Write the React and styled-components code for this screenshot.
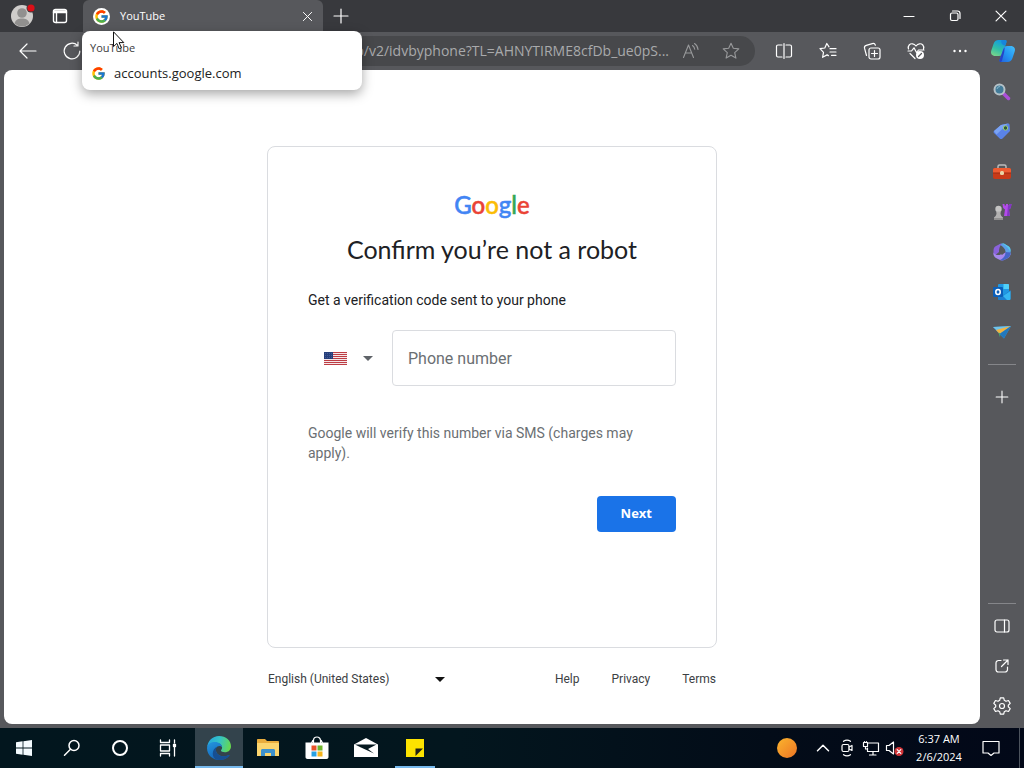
import React from "react";
import styled, { createGlobalStyle } from "styled-components";
import { FcGoogle } from "react-icons/fc";

const uiFont = `"Open Sans", "Noto Sans", sans-serif`;

const GlobalStyle = createGlobalStyle`
  *, *::before, *::after { box-sizing: border-box; }
  body { margin: 0; background: #57585c; font-family: Roboto, "Liberation Sans", sans-serif; }
  button, input, select { font: inherit; }
  svg { display: block; flex: none; }
`;

const Desktop = styled.div`
  min-height: 100vh;
  display: flex;
  flex-direction: column;
`;

const PlainButton = styled.button`
  display: flex;
  align-items: center;
  justify-content: center;
  flex: none;
  padding: 0;
  border: 0;
  background: none;
  color: #fff;
`;

/* Tab strip */
const TabStrip = styled.header`
  display: flex;
  height: 32px;
  background: #38393d;
`;
const TitleButton = styled(PlainButton)`
  width: ${(p) => p.$width}px;
`;
const Tab = styled.div`
  position: relative;
  display: flex;
  align-items: center;
  width: 240px;
  margin-left: 7px;
  padding: 0 8px 0 10px;
  border-radius: 6px 6px 0 0;
  background: #57585c;
  color: #fff;
  font: 11px/16px ${uiFont};
`;
const TabIcon = styled.span`
  display: flex;
  padding: 1px;
  margin-right: 10px;
  border-radius: 50%;
  background: #fff;
`;
const TabTitle = styled.span`
  flex: 1;
`;
const Spacer = styled.div`
  flex: 1;
`;
const HoverCard = styled.div`
  position: absolute;
  z-index: 2;
  top: 31px;
  left: -1px;
  width: 280px;
  padding: 8px 8px 7px;
  border-radius: 8px;
  background: #fff;
  box-shadow: 0 4px 12px rgba(0, 0, 0, 0.35);
  color: #3c3c3c;
`;
const HoverTitle = styled.div`
  font: 11px/18px ${uiFont};
`;
const HoverSite = styled.div`
  display: flex;
  align-items: center;
  gap: 8px;
  padding: 6px 0 0 1px;
  color: #222;
  font: 13px/20px ${uiFont};
`;
const Pointer = styled.svg`
  position: absolute;
  z-index: 3;
  top: 31px;
  left: 30px;
`;

/* Toolbar */
const Toolbar = styled.nav`
  display: flex;
  align-items: center;
  height: 38px;
  padding-left: 6px;
  background: #57585c;
`;
const ToolButton = styled(PlainButton)`
  width: ${(p) => p.$width || 44}px;
  height: 32px;
`;
const AddressBar = styled.div`
  display: flex;
  align-items: center;
  flex: 1;
  min-width: 0;
  height: 30px;
  margin: 0 7px 0 4px;
  padding-right: 4px;
  border-radius: 15px;
  background: #47484b;
`;
const AddressInput = styled.input`
  flex: 1;
  min-width: 0;
  padding: 0 2px 0 0;
  border: 0;
  outline: 0;
  background: none;
  color: #a9aaac;
  text-align: right;
  font: 14px/20px ${uiFont};
`;
const AddressButton = styled(PlainButton)`
  width: 40px;
  color: #98999b;
`;

/* Content and sidebar */
const Body = styled.div`
  display: flex;
  flex: 1;
  background: #57585c;
`;
const Page = styled.main`
  display: flex;
  flex: 1;
  flex-direction: column;
  align-items: center;
  margin: 0 0 4px 4px;
  padding: 76px 24px 35px;
  border-radius: 8px;
  background: #fff;
`;
const Sidebar = styled.aside`
  display: flex;
  flex-direction: column;
  width: 44px;
  padding: 2px 0;
`;
const SideButton = styled(PlainButton)`
  height: 40px;
`;
const SideRule = styled.hr`
  width: 28px;
  margin: ${(p) => p.$gap};
  align-self: center;
  border: 0;
  border-top: 1px solid #85868a;
`;

/* Sign-in card */
const Card = styled.form`
  width: 100%;
  max-width: 450px;
  min-height: 502px;
  padding: 46px 40px 40px;
  border: 1px solid #dadce0;
  border-radius: 8px;
`;
const Wordmark = styled.div`
  text-align: center;
  font: 500 24px/24px Lato, sans-serif;
  -webkit-text-stroke: 0.5px currentColor;
  span:nth-child(1), span:nth-child(4) { color: #4285f4; }
  span:nth-child(2), span:nth-child(6) { color: #ea4335; }
  span:nth-child(3) { color: #fbbc05; }
  span:nth-child(5) { color: #34a853; }
`;
const Heading = styled.h1`
  margin: 16px 0 25px;
  color: #202124;
  text-align: center;
  font: 400 25px/32px Lato, sans-serif;
`;
const Lead = styled.p`
  margin: 0;
  color: #202124;
  font-size: 14px;
  line-height: 20px;
`;
const PhoneRow = styled.div`
  display: flex;
  gap: 4px;
  margin: 20px 0 37px;
`;
const CountryField = styled.label`
  display: flex;
  align-items: center;
  position: relative;
  gap: 16px;
  width: 80px;
  padding-left: 16px;
`;
const CountrySelect = styled.select`
  position: absolute;
  inset: 0;
  width: 100%;
  border: 0;
  background: none;
  appearance: none;
`;
const PhoneInput = styled.input`
  flex: 1;
  min-width: 0;
  height: 56px;
  padding: 0 15px;
  border: 1px solid #dadce0;
  border-radius: 4px;
  background: #fff;
  font-size: 16px;
  &::placeholder { color: #6b6f73; opacity: 1; }
`;
const Note = styled.p`
  margin: 0 0 33px;
  color: #6b6f73;
  font-size: 14px;
  line-height: 20px;
`;
const Actions = styled.div`
  display: flex;
  justify-content: flex-end;
`;
const NextButton = styled.button`
  height: 36px;
  padding: 0 24px 2px;
  border: 0;
  border-radius: 4px;
  background: #1a73e8;
  color: #fff;
  font: 700 13px/20px ${uiFont};
`;
const Footer = styled.footer`
  display: flex;
  align-items: center;
  justify-content: space-between;
  width: 100%;
  max-width: 450px;
  padding: 21px 1px 0;
  color: #3c4043;
  font-size: 12px;
  line-height: 20px;
`;
const LanguageField = styled.label`
  position: relative;
  display: flex;
  align-items: center;
`;
const LanguageSelect = styled.select`
  width: 177px;
  height: 20px;
  padding: 0;
  border: 0;
  background: none;
  color: inherit;
  appearance: none;
`;
const LanguageArrow = styled.svg`
  position: absolute;
  right: 0;
  pointer-events: none;
`;
const FooterLinks = styled.nav`
  display: flex;
  gap: 32px;
`;
const FooterLink = styled.a`
  color: inherit;
  text-decoration: none;
`;

/* Taskbar */
const Taskbar = styled.footer`
  display: flex;
  height: 40px;
  background: linear-gradient(90deg, #02161e 0%, #03161e 45%, #030c18 75%, #020818 100%);
`;
const TaskGroup = styled.div`
  display: flex;
  gap: ${(p) => p.$gap || 0}px;
  margin-left: ${(p) => p.$inset || 0}px;
`;
const TaskButton = styled(PlainButton)`
  position: relative;
  width: ${(p) => p.$width || 48}px;
  background: ${(p) => (p.$active ? "#33434c" : "none")};
  &::after {
    content: "";
    display: ${(p) => (p.$running ? "block" : "none")};
    position: absolute;
    bottom: 0;
    left: ${(p) => (p.$active ? 0 : 4)}px;
    right: ${(p) => (p.$active ? 0 : 4)}px;
    height: 2px;
    background: #76b9ed;
  }
`;
const Clock = styled(PlainButton)`
  flex-direction: column;
  width: 64px;
  font: 11px/18px ${uiFont};
`;
const ShowDesktop = styled(PlainButton)`
  width: 5px;
  margin-left: 8px;
  border-left: 1px solid #4c535d;
`;

function Line({ size = 20, width = 1.2, children, ...rest }) {
  return (
    <svg width={size} height={size} viewBox="0 0 20 20" fill="none" stroke="currentColor" strokeWidth={width} strokeLinecap="round" strokeLinejoin="round" aria-hidden="true" {...rest}>
      {children}
    </svg>
  );
}

const CloseIcon = ({ size = 16 }) => <Line size={size} width={1.3}><path d="M4.5 4.5l11 11M15.5 4.5l-11 11" /></Line>;
const star = "M10 2.2l2.3 5.1 5.5.6-4.1 3.7 1.2 5.5L10 14.3l-4.9 2.8 1.2-5.5L2.2 7.900l5.500-.6z";

const AvatarIcon = () => (
  <svg width="28" height="28" viewBox="0 0 28 28" aria-hidden="true">
    <circle cx="14" cy="14" r="11" fill="#cfcdcb" />
    <circle cx="14" cy="11" r="4.800" fill="#91908f" />
    <path d="M6.500 21.500c1-4 4-5 7.500-5s6.500 1 7.500 5A11 11 0 0 1 6.500 21.500z" fill="#91908f" />
    <circle cx="23" cy="6" r="4.500" fill="#38393d" />
    <circle cx="23" cy="6" r="3.600" fill="#dc0f17" />
  </svg>
);

const CopilotIcon = () => (
  <svg width="26" height="24" viewBox="0 0 26 24" aria-hidden="true">
    <defs>
      <linearGradient id="cpa" x1=".2" y1="1" x2=".6" y2="0"><stop stopColor="#7bd68a" /><stop offset=".45" stopColor="#31bfa5" /><stop offset="1" stopColor="#129ae2" /></linearGradient>
      <linearGradient id="cpb" x1="0" y1="1" x2="1" y2="0"><stop stopColor="#2360dc" /><stop offset=".5" stopColor="#2497f3" /><stop offset="1" stopColor="#45c0fa" /></linearGradient>
    </defs>
    <path d="M8.500 1H15c1.200 0 1.800.8 1.400 2.200L12.500 14.500c-.6 1.700-1.700 2.500-3.500 2.500H5.500C1.800 17 .3 14.500 1.300 11.500L3.500 5C4.400 2.200 6 1 8.500 1z" fill="url(#cpa)" />
    <path d="M11.500 1H15c1.200 0 1.800.8 1.500 2.200L15.500 6.500C12.500 6.500 10.500 4 11.500 1z" fill="#1785dc" />
    <path d="M17 7h3.500c3.700 0 5.200 2.500 4.200 5.500L22.500 19c-.9 2.800-2.500 4-5 4H11c-1.200 0-1.800-.8-1.400-2.200L13.500 9.500C14.100 7.800 15.200 7 17 7z" fill="url(#cpb)" />
    <path d="M13.200 10.500c.3-1 .8-1.700 1.500-2.300l-.5 5L12 21.500c-.3.900-.7 1.300-1.400 1.500-1-.2-1.300-1-1-2.200z" fill="#2444c8" />
  </svg>
);

const SideSearch = () => (
  <svg width="20" height="20" viewBox="0 0 20 20" aria-hidden="true">
    <path d="M11.500 11.500l5 5" stroke="#ac4fda" strokeWidth="3.500" strokeLinecap="round" />
    <circle cx="7.500" cy="7.500" r="5" fill="#427b99" stroke="#b5c1c7" strokeWidth="2" />
    <path d="M5 7a3 3 0 0 1 3-2.500" stroke="#87b6c9" fill="none" />
  </svg>
);
const SideTag = () => (
  <svg width="20" height="20" viewBox="0 0 20 20" aria-hidden="true">
    <path d="M2 9l7-6 7-1.500c1 0 1.500.5 1.600 1.500l.4 6-7.500 7.500c-.8.8-2 .8-2.800 0L2 11c-.6-.7-.6-1.400 0-2z" fill="#5a83e8" />
    <path d="M2 9l7-6 7-1.500-11.500 11z" fill="#7ba4f4" />
    <circle cx="13.500" cy="6" r="2.200" fill="#33583b" stroke="#9bd079" strokeWidth="1" />
  </svg>
);
const SideToolbox = () => (
  <svg width="20" height="20" viewBox="0 0 20 20" aria-hidden="true">
    <path d="M6 7V4.500C6 3.500 6.700 3 7.500 3h5c.8 0 1.500.5 1.500 1.500V7" fill="none" stroke="#bcbcbc" strokeWidth="1.500" />
    <rect x="1" y="6" width="18" height="11" rx="2" fill="#c93a18" />
    <path d="M1 8c0-1.200.8-2 2-2h14c1.200 0 2 .8 2 2v3H1z" fill="#ee5b31" />
    <path d="M1 10.500h18v1H1z" fill="#9e2b13" />
    <rect x="8" y="9" width="4" height="4" rx="1.500" fill="#e8d4a6" />
  </svg>
);
const SideGames = () => (
  <svg width="20" height="20" viewBox="0 0 20 20" aria-hidden="true">
    <path d="M10.500 2h2v1.500h1.500V2h2v1.500h1.500V2h2l-.7 4-1.800 1.500.8 6.500H12l1-6.500L11.200 6z" fill="#b34bea" />
    <path d="M16 3.500h1.500V2h2l-.7 4-1.800 1.500.8 6.500H15z" fill="#8236c3" />
    <circle cx="6.500" cy="7" r="3.200" fill="#c5c4c4" />
    <path d="M4 9.500h5l-.5 1.500c0 2 .7 3 2.500 4.500V18H2v-2.500C3.800 14 4.500 13 4.500 11z" fill="#b2b1b1" />
    <path d="M2 16h9v2H2z" fill="#919090" />
  </svg>
);
const SideOffice = () => (
  <svg width="20" height="20" viewBox="0 0 20 20" aria-hidden="true">
    <path d="M7 2.500c2-1.300 4-1.300 6-.2l3 1.800c1.700 1 2.500 2.200 2.500 4v5L13.500 10C13.500 7 11.500 4.500 7 2.500z" fill="#5b9fe8" />
    <path d="M10 1.300c1.300 0 2.200.3 3.500 1.100l2.500 1.500c1.700 1 2.500 2.200 2.500 4V10C16.500 6 14 3.500 10 1.300z" fill="#58cdea" />
    <path d="M9.500 1.500c-1.200 2.500-2.500 4-2.500 8.500l-4.700 4C1.600 13 1.500 12 1.500 11V8.500c0-2 .8-3.400 2.500-4.400l3-1.700z" fill="#8a62dc" />
    <path d="M1.500 10.500c1 1.800 3.500 3 6 2.500l6-2.800 5 1.300c0 2-.8 3.400-2.500 4.400l-3 1.700c-2 1.200-4 1.200-6 0l-3-1.700c-1.700-1-2.500-2.400-2.500-4.400z" fill="#a688ec" />
    <path d="M18.500 10.500c0 3-1 4.500-2.500 5.400l-3 1.700c-1.700 1-3.300 1.100-5 .5 3.500-1.700 5.500-4.300 5.500-8.100z" fill="#4565c9" />
    <path d="M7 10l3-2.500 3.500 2.500-3.500 3z" fill="#57585c" />
  </svg>
);
const SideOutlook = () => (
  <svg width="20" height="20" viewBox="0 0 20 20" aria-hidden="true">
    <rect x="6" y="2" width="11" height="12" rx="1" fill="#2098e2" />
    <path d="M11.500 2H16a1 1 0 0 1 1 1v4h-5.500z" fill="#50d0f8" />
    <path d="M6 9l6 4 6.500-5V16.500c0 1-.5 1.500-1.500 1.500H7c-.6 0-1-.4-1-1z" fill="#1c7fd0" />
    <path d="M18.500 9v7.500c0 1-.5 1.500-1.500 1.500h-2l-4-4z" fill="#35b7f2" />
    <rect x="1" y="5" width="10" height="10" rx="1" fill="#0b5eb8" />
    <ellipse cx="6" cy="10" rx="2.200" ry="2.500" fill="none" stroke="#fff" strokeWidth="1.500" />
  </svg>
);
const SideDrop = () => (
  <svg width="20" height="20" viewBox="0 0 20 20" aria-hidden="true">
    <path d="M1 5L19 4l-7 12.500-4-4z" fill="#3598dc" />
    <path d="M1 5L19 4 5.500 9z" fill="#72c4e9" />
    <path d="M4 8L19 4 7.500 12z" fill="#f3b440" />
    <path d="M7.500 12L19 4l-7 12.500z" fill="#2378bd" />
    <path d="M6.500 10.500l1.800.8-.3 4.200z" fill="#47ac73" />
  </svg>
);

const gearPath = "M8.300 1.800h3.400l.6 2.500 1.700 1 2.500-.8 1.700 2.900L16.300 9.200v1.600l1.900 1.800-1.700 2.900-2.500-.8-1.700 1-.6 2.500H8.300l-.6-2.500-1.700-1-2.500.8-1.700-2.900 1.900-1.800V9.200L1.800 7.400l1.700-2.900 2.500.8 1.700-1z";

const WindowsIcon = () => (
  <svg width="16" height="16" viewBox="0 0 16 16" fill="#f4fbff" aria-hidden="true">
    <path d="M0 2.200l6.600-.9v6.300H0zM7.400 1.200L16 0v7.600H7.400zM0 8.400h6.600v6.300L0 13.800zM7.400 8.400H16V16l-8.600-1.200z" />
  </svg>
);
const EdgeIcon = () => (
  <svg width="24" height="24" viewBox="0 0 24 24" aria-hidden="true">
    <defs>
      <linearGradient id="eg" x1="0" y1=".3" x2="1" y2=".5"><stop stopColor="#25a6df" /><stop offset=".5" stopColor="#35c4c5" /><stop offset="1" stopColor="#66d84f" /></linearGradient>
      <linearGradient id="eb" x1="0" y1="0" x2=".6" y2="1"><stop stopColor="#2496df" /><stop offset="1" stopColor="#1260b6" /></linearGradient>
    </defs>
    <path d="M.1 11.500C.6 5 5.500 0 12 0c7 0 12 4.800 12 10.300 0 3.900-2.900 6-6 6-2.400 0-4-.8-4-1.700 0-.7 1.100-1.200 1.100-3C15.100 9 12.500 7 9 7 4 7 .5 9.300.1 11.500z" fill="url(#eg)" />
    <path d="M.1 11.500C.3 8 4 6 8 6c4 0 7 2.400 7.100 5.300C14 9.900 12 9.500 10.500 10.500c-2.700 1.800-2 6 1 8.300 2.900 2.200 7 2.200 10.300.3.500-.3.800.2.500.6C20 22.500 16.500 24 12.500 24 5.500 24-.5 18.500.1 11.500z" fill="url(#eb)" />
    <path d="M8.800 23.500C4.500 20.500 4.500 13 10.500 10.500c-2.500 2-2 6 1 8.300 2.900 2.200 7 2.200 10.300.3.500-.3.800.2.500.6-3 3.900-9.200 5-13.500 3.800z" fill="#174f92" />
  </svg>
);
const FolderIcon = () => (
  <svg width="22" height="20" viewBox="0 0 22 20" aria-hidden="true">
    <path d="M0 2c0-.6.400-1 1-1h7l2 2h11c.6 0 1 .4 1 1v14H0z" fill="#e9ad3d" />
    <path d="M0 5h22v13H0z" fill="#fbd56e" />
    <path d="M4 18v-5.500c0-1 .7-1.500 1.500-1.500h11c.8 0 1.500.5 1.500 1.500V18h-4v-3H8v3z" fill="#3d91cc" />
  </svg>
);
const StoreIcon = () => (
  <svg width="24" height="24" viewBox="0 0 24 24" aria-hidden="true">
    <path d="M8.500 7V4.500a3.500 3.500 0 0 1 7 0V7M6.500 7l1.500-3M17.500 7L16 4" fill="none" stroke="#fff" strokeWidth="1.200" />
    <path d="M.5 6.500h23V21c0 1.200-.8 2-2 2h-19c-1.200 0-2-.8-2-2z" fill="#fff" />
    <path d="M6.500 9.500h5v5h-5z" fill="#e8532b" /><path d="M12.500 9.500h5v5h-5z" fill="#6fb52c" />
    <path d="M6.500 15.500h5v5h-5z" fill="#2aa1e2" /><path d="M12.500 15.500h5v5h-5z" fill="#f7b51c" />
  </svg>
);
const MailIcon = () => (
  <svg width="24" height="20" viewBox="0 0 24 20" aria-hidden="true">
    <path d="M0 6.500L12 0l12 6.500V19H0z" fill="#fff" />
    <path d="M1 6.500h21.500L14 11l6 4.500L7 9.500z" fill="#061920" />
  </svg>
);
const NoteIcon = () => (
  <svg width="18" height="18" viewBox="0 0 18 18" aria-hidden="true">
    <path d="M0 0h18v18H0z" fill="#fde300" />
    <path d="M9.500 9.500H17L9.500 17z" fill="#1f2017" />
  </svg>
);

const Flag = () => (
  <svg width="23" height="13" viewBox="0 0 23 13" aria-hidden="true">
    <path d="M0 0h23v13H0z" fill="#f5e7e9" />
    {[0, 2, 4, 6, 8, 10, 12].map((y) => <path key={y} d={`M0 ${y}h23v1H0z`} fill="#bd3d44" />)}
    <path d="M0 0h9v7H0z" fill="#263f7c" />
    <path d="M1 1.500h7M1 3.500h7M1 5.500h7" stroke="#5b70a4" strokeWidth=".6" strokeDasharray="1 1" />
  </svg>
);

const sideItems = [
  ["Search", SideSearch], ["Shopping", SideTag], ["Tools", SideToolbox], ["Games", SideGames],
  ["Microsoft 365", SideOffice], ["Outlook", SideOutlook], ["Drop", SideDrop],
];

export default function App() {
  return (
    <Desktop>
      <GlobalStyle />
      <TabStrip>
        <TitleButton $width={44} aria-label="Profile"><AvatarIcon /></TitleButton>
        <TitleButton $width={32} aria-label="Tab actions">
          <Line width={1.4}><rect x="3.500" y="3.500" width="13" height="13" rx="2" /><path d="M3.500 5h13M3.500 6.500h13M6.500 6.500v10" /></Line>
        </TitleButton>
        <Tab>
          <TabIcon><FcGoogle size={15} /></TabIcon>
          <TabTitle>YouTube</TabTitle>
          <PlainButton aria-label="Close tab"><CloseIcon size={15} /></PlainButton>
          <HoverCard>
            <HoverTitle>YouTube</HoverTitle>
            <HoverSite><FcGoogle size={15} />accounts.google.com</HoverSite>
          </HoverCard>
          <Pointer width="13" height="19" viewBox="0 0 13 19" aria-hidden="true">
            <path d="M.5.800v14.800l3.400-3.200 2.300 5.400 2.200-1-2.300-5.200h4.700z" fill="#fff" stroke="#111" />
          </Pointer>
        </Tab>
        <TitleButton $width={36} aria-label="New tab"><Line><path d="M10 3v14M3 10h14" /></Line></TitleButton>
        <Spacer />
        <TitleButton $width={46} aria-label="Minimize"><Line><path d="M5 10.500h10" /></Line></TitleButton>
        <TitleButton $width={46} aria-label="Restore">
          <Line><rect x="5.500" y="7" width="7.500" height="7.500" rx="1.500" /><path d="M7.500 5h5a2.500 2.500 0 0 1 2.500 2.500v5" /></Line>
        </TitleButton>
        <TitleButton $width={46} aria-label="Close"><CloseIcon size={18} /></TitleButton>
      </TabStrip>

      <Toolbar>
        <ToolButton aria-label="Back"><Line><path d="M2 10h16M9 3l-7 7 7 7" /></Line></ToolButton>
        <ToolButton aria-label="Refresh"><Line><path d="M15.500 4.500A7.800 7.800 0 1 0 17.800 10M16 1v4h-4" /></Line></ToolButton>
        <AddressBar>
          <AddressInput aria-label="Address" defaultValue="up/v2/idvbyphone?TL=AHNYTIRME8cfDb_ue0pS..." />
          <AddressButton aria-label="Read aloud">
            <Line width={1.1}><path d="M2.500 16.500L7.500 4l5 12.500M4.300 12h6.400M11.500 4.500c1.200.8 2 2 2.200 3.800M13.500 2.500c2 1.200 3.300 3.200 3.500 6" /></Line>
          </AddressButton>
          <AddressButton aria-label="Add to favorites"><Line width={1.1}><path d={star} /></Line></AddressButton>
        </AddressBar>
        <ToolButton aria-label="Split screen">
          <Line><path d="M8 4H4a1.500 1.500 0 0 0-1.500 1.500v9A1.500 1.500 0 0 0 4 16h4M12 4h4a1.500 1.500 0 0 1 1.500 1.500v9A1.500 1.500 0 0 1 16 16h-4M10 2.500v15" /></Line>
        </ToolButton>
        <ToolButton aria-label="Favorites">
          <Line><path d="M11 5.800L8.800 2.500 6.800 7 2 7.700l3.500 3.600-.9 5 4.500-2.400 1.300.7M12 7.700h6M12 11h6M13.500 14.300H18" /></Line>
        </ToolButton>
        <ToolButton aria-label="Collections">
          <Line><rect x="7" y="7" width="11" height="11" rx="2" /><path d="M12.500 9.500v6M9.500 12.500h6M4.500 14.500l-2-7.300A2.500 2.500 0 0 1 4.300 4.300l6-1.700A2.500 2.500 0 0 1 13.400 4.200" /></Line>
        </ToolButton>
        <ToolButton aria-label="Browser essentials">
          <Line><path d="M2.500 8C1.500 4.500 4 2.500 6.500 2.800 8.500 3 10 5 10 5s1.500-2 3.500-2.200C16 2.500 18.500 4.500 17.500 8M2 10h3.500L8 6.800l2.500 4.700L12.500 9H18M4 12.500l5 5" /><circle cx="14" cy="14" r="4" fill="#fff" stroke="none" /><path d="M12.500 15.500l3-3" stroke="#57585c" /></Line>
        </ToolButton>
        <ToolButton aria-label="Settings and more">
          <Line><g fill="currentColor" stroke="none"><circle cx="4.500" cy="10" r="1.200" /><circle cx="10" cy="10" r="1.200" /><circle cx="15.500" cy="10" r="1.200" /></g></Line>
        </ToolButton>
        <ToolButton $width={42} aria-label="Copilot"><CopilotIcon /></ToolButton>
      </Toolbar>

      <Body>
        <Page>
          <Card onSubmit={(e) => e.preventDefault()}>
            <Wordmark>
              <span>G</span><span>o</span><span>o</span><span>g</span><span>l</span><span>e</span>
            </Wordmark>
            <Heading>Confirm you’re not a robot</Heading>
            <Lead>Get a verification code sent to your phone</Lead>
            <PhoneRow>
              <CountryField>
                <Flag />
                <svg width="10" height="5" viewBox="0 0 10 5" aria-hidden="true"><path d="M0 0h10L5 5z" fill="#5f6368" /></svg>
                <CountrySelect aria-label="Country"><option value="US" aria-label="United States" /></CountrySelect>
              </CountryField>
              <PhoneInput type="tel" aria-label="Phone number" placeholder="Phone number" />
            </PhoneRow>
            <Note>Google will verify this number via SMS (charges may apply).</Note>
            <Actions><NextButton type="submit">Next</NextButton></Actions>
          </Card>
          <Footer>
            <LanguageField>
              <LanguageSelect aria-label="Language"><option>English (United States)</option></LanguageSelect>
              <LanguageArrow width="10" height="5" viewBox="0 0 10 5" aria-hidden="true"><path d="M0 0h10L5 5z" fill="#111" /></LanguageArrow>
            </LanguageField>
            <FooterLinks>
              <FooterLink href="#help">Help</FooterLink>
              <FooterLink href="#privacy">Privacy</FooterLink>
              <FooterLink href="#terms">Terms</FooterLink>
            </FooterLinks>
          </Footer>
        </Page>
        <Sidebar>
          {sideItems.map(([name, Icon]) => <SideButton key={name} aria-label={name}><Icon /></SideButton>)}
          <SideRule $gap="12px 0" />
          <SideButton aria-label="Customize"><Line size={18}><path d="M10 3.500v13M3.500 10h13" /></Line></SideButton>
          <Spacer />
          <SideRule $gap="2px 0" />
          <SideButton aria-label="Toggle sidebar"><Line><rect x="3" y="4" width="14" height="12" rx="2" /><path d="M12.500 4v12" /></Line></SideButton>
          <SideButton aria-label="Open link">
            <Line><path d="M9 4.500H6.500a2.500 2.500 0 0 0-2.500 2.500v6.500A2.500 2.500 0 0 0 6.500 16H13a2.500 2.500 0 0 0 2.500-2.500V11M11.500 4H16v4.500M16 4l-6.500 6.500" /></Line>
          </SideButton>
          <SideButton aria-label="Settings"><Line><path d={gearPath} /><circle cx="10" cy="10" r="2.500" /></Line></SideButton>
        </Sidebar>
      </Body>

      <Taskbar>
        <TaskGroup>
          <TaskButton aria-label="Start"><WindowsIcon /></TaskButton>
          <TaskButton aria-label="Search"><Line width={1.500}><circle cx="12" cy="7.500" r="5" /><path d="M8.500 11.300L2.500 17.300" /></Line></TaskButton>
          <TaskButton aria-label="Cortana"><Line width={2}><circle cx="10" cy="10" r="7" /></Line></TaskButton>
          <TaskButton aria-label="Task view"><Line width={1.300}><path d="M2.500 2v2.500h9V2M2.500 18v-2.500h9V18M2.500 7h9v6h-9zM16.500 2v3M16.500 9.500V18" /><path d="M15.500 6.500h2v2h-2z" fill="currentColor" /></Line></TaskButton>
        </TaskGroup>
        <TaskGroup $gap={1} $inset={3}>
          <TaskButton $active $running aria-label="Microsoft Edge"><EdgeIcon /></TaskButton>
          <TaskButton aria-label="File Explorer"><FolderIcon /></TaskButton>
          <TaskButton aria-label="Microsoft Store"><StoreIcon /></TaskButton>
          <TaskButton aria-label="Mail"><MailIcon /></TaskButton>
          <TaskButton $running aria-label="Sticky Notes"><NoteIcon /></TaskButton>
        </TaskGroup>
        <Spacer />
        <TaskGroup>
          <TaskButton aria-label="Weather">
            <svg width="20" height="20" viewBox="0 0 20 20" aria-hidden="true">
              <defs><linearGradient id="sun" x1="0" y1="0" x2="1" y2="1"><stop stopColor="#fbb52e" /><stop offset="1" stopColor="#ec7424" /></linearGradient></defs>
              <circle cx="10" cy="10" r="10" fill="url(#sun)" />
            </svg>
          </TaskButton>
          <TaskButton $width={24} aria-label="Show hidden icons"><Line width={1.500}><path d="M4.500 12.800l5.500-5.500 5.500 5.500" /></Line></TaskButton>
          <TaskButton $width={24} aria-label="Meet now"><Line><rect x="5" y="6.500" width="7" height="7" rx="1.500" /><path d="M12 9l3-1.500v5L12 11M6.500 3.300c2-1.300 5-1.300 7 0M6.500 16.700c2 1.300 5 1.300 7 0" /></Line></TaskButton>
          <TaskButton $width={24} aria-label="Network"><Line><path d="M7.500 5h10v8.500h-11V10M12 13.500V17M8.500 17H15M2.500 4.500h4v4h-4zM4.500 8.500V11h2M3.500 4.500v-1M5.500 4.500v-1" /></Line></TaskButton>
          <TaskButton $width={24} aria-label="Volume muted">
            <Line><path d="M1.500 7.500h2.500L8.500 4v12L4 12.500H1.500z" /><circle cx="14" cy="13.500" r="4.500" fill="#d13438" stroke="none" /><path d="M12.200 11.700l3.600 3.600M15.800 11.700l-3.600 3.600" /></Line>
          </TaskButton>
          <Clock aria-label="Clock"><span>6:37 AM</span><span>2/6/2024</span></Clock>
          <TaskButton $width={40} aria-label="Notifications"><Line><path d="M2 3.500h16v11.500h-5l-3 2.500-3-2.500H2z" /></Line></TaskButton>
          <ShowDesktop aria-label="Show desktop" />
        </TaskGroup>
      </Taskbar>
    </Desktop>
  );
}
